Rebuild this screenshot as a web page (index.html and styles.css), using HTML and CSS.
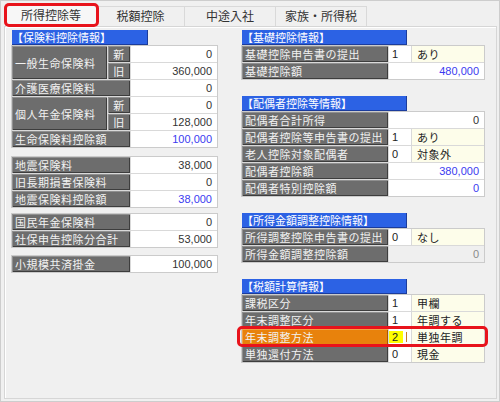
FILE: index.html
```html
<!DOCTYPE html>
<html lang="ja">
<head>
  <meta charset="UTF-8">
  <title>所得控除等</title>
  <link rel="stylesheet" href="styles.css">
</head>
<body>

  <div class="ventana">
    <div class="tabs">
      <div class="tab activa">所得控除等</div>
      <div class="tab">税額控除</div>
      <div class="tab">中途入社</div>
      <div class="tab">家族・所得税</div>
    </div>

    <div class="panel">

      <!-- columna izquierda: seguros -->
      <div class="col izq">
        <div class="cab">【保険料控除情報】</div>
        <div class="grupo">
          <div class="fila par">
            <div class="etq">一般生命保険料</div>
            <div class="subs">
              <div class="sub"><div class="etq mini">新</div><div class="val">0</div></div>
              <div class="sub"><div class="etq mini">旧</div><div class="val">360,000</div></div>
            </div>
          </div>
          <div class="fila"><div class="etq">介護医療保険料</div><div class="val">0</div></div>
          <div class="fila par">
            <div class="etq">個人年金保険料</div>
            <div class="subs">
              <div class="sub"><div class="etq mini">新</div><div class="val">0</div></div>
              <div class="sub"><div class="etq mini">旧</div><div class="val">128,000</div></div>
            </div>
          </div>
          <div class="fila"><div class="etq">生命保険料控除額</div><div class="val azul">100,000</div></div>
        </div>

        <div class="grupo g2">
          <div class="fila"><div class="etq">地震保険料</div><div class="val">38,000</div></div>
          <div class="fila"><div class="etq">旧長期損害保険料</div><div class="val">0</div></div>
          <div class="fila"><div class="etq">地震保険料控除額</div><div class="val azul">38,000</div></div>
        </div>

        <div class="grupo g3">
          <div class="fila"><div class="etq">国民年金保険料</div><div class="val">0</div></div>
          <div class="fila"><div class="etq">社保申告控除分合計</div><div class="val">53,000</div></div>
        </div>

        <div class="grupo g4">
          <div class="fila"><div class="etq">小規模共済掛金</div><div class="val">100,000</div></div>
        </div>
      </div>

      <!-- columna derecha -->
      <div class="col der">
        <div class="bloque">
          <div class="cab">【基礎控除情報】</div>
          <div class="grupo">
            <div class="fila"><div class="etq">基礎控除申告書の提出</div><div class="cod">1</div><div class="txt">あり</div></div>
            <div class="fila"><div class="etq">基礎控除額</div><div class="val azul">480,000</div></div>
          </div>
        </div>

        <div class="bloque">
          <div class="cab">【配偶者控除等情報】</div>
          <div class="grupo">
            <div class="fila"><div class="etq">配偶者合計所得</div><div class="val">0</div></div>
            <div class="fila"><div class="etq">配偶者控除等申告書の提出</div><div class="cod">1</div><div class="txt">あり</div></div>
            <div class="fila"><div class="etq">老人控除対象配偶者</div><div class="cod">0</div><div class="txt">対象外</div></div>
            <div class="fila"><div class="etq">配偶者控除額</div><div class="val azul">380,000</div></div>
            <div class="fila"><div class="etq">配偶者特別控除額</div><div class="val azul">0</div></div>
          </div>
        </div>

        <div class="bloque">
          <div class="cab">【所得金額調整控除情報】</div>
          <div class="grupo">
            <div class="fila"><div class="etq">所得調整控除申告書の提出</div><div class="cod">0</div><div class="txt">なし</div></div>
            <div class="fila"><div class="etq">所得金額調整控除額</div><div class="val gris">0</div></div>
          </div>
        </div>

        <div class="bloque">
          <div class="cab">【税額計算情報】</div>
          <div class="grupo">
            <div class="fila"><div class="etq">課税区分</div><div class="cod">1</div><div class="txt">甲欄</div></div>
            <div class="fila"><div class="etq">年末調整区分</div><div class="cod">1</div><div class="txt">年調する</div></div>
            <div class="fila marca">
              <div class="etq naranja">年末調整方法</div>
              <div class="cod"><span class="sel">2</span><span class="cursor"></span></div>
              <div class="txt">単独年調</div>
            </div>
            <div class="fila"><div class="etq">単独還付方法</div><div class="cod">0</div><div class="txt">現金</div></div>
          </div>
        </div>
      </div>

    </div>
  </div>

</body>
</html>
```

FILE: styles.css
```css
body {
  margin: 0;
  background-color: #f0f0f0;
  font-family: "Noto Sans CJK JP", sans-serif;
  font-size: 11px;
  color: #222;
}

.ventana {
  box-sizing: border-box;
  width: 500px;
  height: 402px;
  border: 1px solid #cdcdcd;
  padding: 0 1px 2px 3px;
  display: flex;
  flex-direction: column;
}

/* pestañas */
.tabs {
  display: flex;
  align-items: flex-end;
  height: 25px;
  padding-left: 1px;
  flex-shrink: 0;
}

.tab {
  position: relative;
  box-sizing: border-box;
  height: 20px;
  line-height: 18px;
  text-align: center;
  font-size: 12px;
  color: #333;
  background-color: #f0f0f0;
  border: 1px solid #d9d9d9;
  border-bottom: none;
}

.tab + .tab {
  margin-left: -1px;
}

.tab:nth-child(1) { width: 92px; }
.tab:nth-child(2) { width: 89px; }
.tab:nth-child(3) { width: 92px; }
.tab:nth-child(4) { width: 92px; }

.tab.activa {
  height: 23px;
  line-height: 20px;
  margin-bottom: -1px;
  background-color: #f7f7f7;
  z-index: 1;
}

.tab.activa::after {
  content: "";
  position: absolute;
  left: -2px;
  right: -3px;
  top: -2px;
  bottom: 0;
  border: 3px solid #e8131b;
  border-radius: 5px;
}

/* panel */
.panel {
  box-sizing: border-box;
  width: 493px;
  flex: 1;
  border: 1px solid #d6d6d6;
  box-shadow: inset 1px 1px 0 #fff;
  padding: 3px 0 0 6px;
  display: flex;
  gap: 23px;
  align-items: flex-start;
}

.col {
  display: flex;
  flex-direction: column;
}

.izq {
  width: 207px;
}

.der {
  width: 244px;
}

.cab {
  box-sizing: border-box;
  height: 15px;
  line-height: 15px;
  color: #fff;
  background-color: #2c62e4;
  box-shadow: inset -1px -1px 0 #1b3c9c;
  margin-left: 1px;
  white-space: nowrap;
}

.izq .cab { width: 136px; }
.der .cab { width: 165px; }

.grupo {
  display: flex;
  flex-direction: column;
  gap: 1px;
  border: 1px solid #cbcbcb;
  background-color: #d9d9d9;
}

.izq .g2 { margin-top: 8px; }
.izq .g3 { margin-top: 5px; }
.izq .g4 { margin-top: 7px; }

.bloque + .bloque {
  margin-top: 16px;
}

.fila {
  display: grid;
  gap: 1px;
  height: 16px;
}

.izq .fila {
  grid-template-columns: 118px 86px;
}

.izq .fila.par {
  grid-template-columns: 95px 109px;
  height: auto;
}

.subs {
  display: flex;
  flex-direction: column;
  gap: 1px;
}

.sub {
  display: grid;
  grid-template-columns: 22px 86px;
  gap: 1px;
  height: 16px;
}

.der .fila {
  grid-template-columns: 146px 22px 72px;
}

.der .val {
  grid-column: span 2;
}

/* celdas */
.etq {
  display: flex;
  align-items: center;
  padding-left: 3px;
  background-color: #6d6d6d;
  color: #f2f2f2;
  box-shadow: inset 1px 1px 0 #8f8f8f, inset -1px -1px 0 #3d3d3d;
  letter-spacing: 0.5px;
  white-space: nowrap;
  overflow: hidden;
}

.etq.mini {
  justify-content: center;
  padding-left: 0;
}

.etq.naranja {
  background-color: #e8820c;
  box-shadow: inset 1px 1px 0 #f5a244, inset -1px -1px 0 #a85800;
}

.val {
  background-color: #fff;
  text-align: right;
  padding-right: 5px;
  line-height: 16px;
  font-family: "Liberation Sans", sans-serif;
  color: #333;
}

.val.azul {
  color: #3b3bf0;
}

.val.gris {
  background-color: #efefef;
  color: #8a8a8a;
}

.cod {
  display: flex;
  align-items: center;
  background-color: #fff;
  padding-left: 3px;
  font-family: "Liberation Sans", sans-serif;
  color: #222;
}

.txt {
  background-color: #fdfdea;
  padding-left: 5px;
  line-height: 16px;
  letter-spacing: 0.5px;
}

.sel {
  display: inline-block;
  height: 12px;
  line-height: 12px;
  margin-left: -3px;
  padding: 0 5px 0 3px;
  background-color: #ffff00;
}

.cursor {
  display: inline-block;
  width: 1px;
  height: 10px;
  margin-left: 3px;
  background-color: #c47a2c;
}

.fila.marca {
  position: relative;
}

.fila.marca::after {
  content: "";
  position: absolute;
  left: -5px;
  right: -4px;
  top: -3px;
  bottom: -2px;
  border: 3px solid #e8131b;
  border-radius: 5px;
}
```
